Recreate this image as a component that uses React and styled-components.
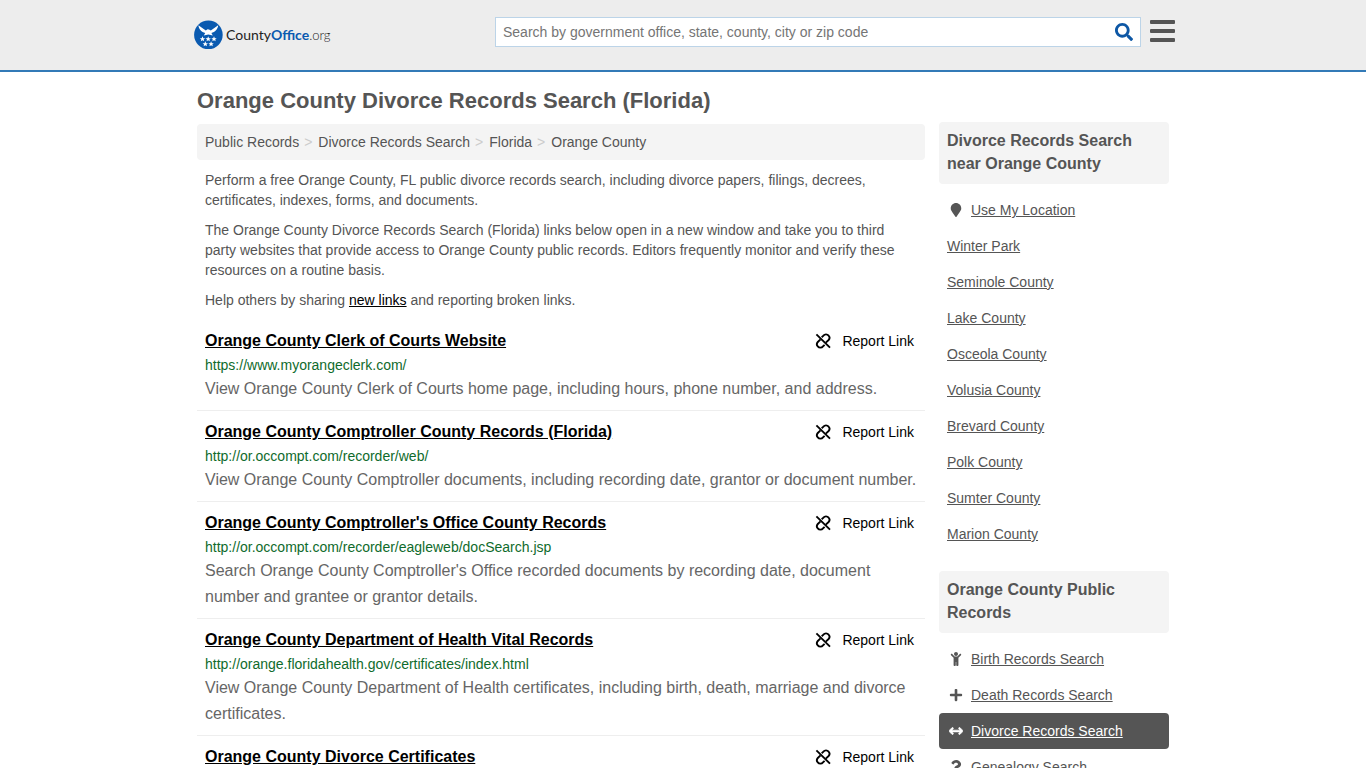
import React from "react";
import styled, { createGlobalStyle } from "styled-components";
import { FaSearch, FaMapMarker, FaChild, FaPlus, FaQuestion } from "react-icons/fa";
import { FaArrowsLeftRight } from "react-icons/fa6";

const GlobalStyle = createGlobalStyle`
  * {
    box-sizing: border-box;
  }

  body {
    margin: 0;
    background-color: #fff;
    color: #555;
    font-family: "Liberation Sans", Arial, sans-serif;
    font-size: 14px;
    line-height: 20px;
  }

  a {
    color: inherit;
  }
`;

const Header = styled.header`
  height: 72px;
  background-color: #ededed;
  border-bottom: 2px solid #337ab7;
`;

const HeaderInner = styled.div`
  display: flex;
  align-items: flex-start;
  justify-content: space-between;
  max-width: 984px;
  margin: 0 auto;
  padding: 16px 0 0 2px;
`;

const Logo = styled.a`
  display: block;
  margin-top: 4px;

  svg {
    display: block;
  }
`;

const HeaderTools = styled.div`
  display: flex;
  align-items: flex-start;
  gap: 9px;
`;

const SearchForm = styled.form`
  display: flex;
  align-items: center;
  width: 646px;
  height: 30px;
  margin-top: 1px;
  background-color: #fff;
  border: 1px solid #bcd4e8;
`;

const SearchInput = styled.input`
  flex: 1;
  min-width: 0;
  height: 28px;
  padding: 0 7px;
  border: 0;
  outline: 0;
  background: transparent;
  color: #555;
  font: inherit;

  &::placeholder {
    color: #757575;
    opacity: 1;
  }
`;

const SearchButton = styled.button`
  display: flex;
  padding: 0 7px;
  border: 0;
  background: transparent;
  color: #0d57a5;
  font-size: 18px;
  cursor: pointer;
`;

const MenuButton = styled.button`
  display: flex;
  flex-direction: column;
  gap: 5px;
  padding: 4px 0;
  border: 0;
  background: transparent;
  cursor: pointer;
`;

const MenuBar = styled.span`
  width: 25px;
  height: 4px;
  border-radius: 1px;
  background-color: #555;
`;

const Page = styled.div`
  display: flex;
  align-items: flex-start;
  gap: 14px;
  max-width: 972px;
  margin: 0 auto;
`;

const Main = styled.main`
  flex: 1;
  min-width: 0;
`;

const Title = styled.h1`
  margin: 16px 0 10px;
  font-size: 22px;
  line-height: 26px;
`;

const Breadcrumb = styled.nav`
  display: flex;
  padding: 8px;
  background-color: #f4f4f4;
  border-radius: 4px;

  a {
    text-decoration: none;
  }

  a + a::before {
    content: ">";
    padding: 0 6px 0 5px;
    color: #ccc;
  }
`;

const Intro = styled.div`
  padding: 0 8px;

  p {
    margin: 10px 0;
  }
`;

const InlineLink = styled.a`
  color: #000;
`;

const Results = styled.ul`
  margin: 0;
  padding: 0;
  list-style: none;
`;

const Result = styled.li`
  padding: 8px;
  border-bottom: 1px solid #eee;
`;

const ResultHead = styled.div`
  display: flex;
  justify-content: space-between;
  line-height: 26px;
`;

const ResultTitle = styled.a`
  color: #000;
  font-size: 16px;
  font-weight: bold;
`;

const ReportButton = styled.button`
  display: flex;
  align-items: center;
  gap: 11px;
  padding: 0 3px;
  border: 0;
  background: transparent;
  color: #000;
  font: inherit;
  cursor: pointer;
`;

const ResultUrl = styled.div`
  color: #0f6b2c;
  line-height: 22px;
`;

const ResultText = styled.div`
  margin-right: -8px;
  font-size: 16px;
  line-height: 26px;
  color: #666;
`;

const Sidebar = styled.aside`
  width: 230px;
  padding-top: 50px;
`;

const SideTitle = styled.h2`
  margin: 0 0 8px;
  padding: 7px 8px 9px;
  background-color: #f4f4f4;
  border-radius: 4px;
  font-size: 16px;
  line-height: 23px;
`;

const SideList = styled.ul`
  margin: 0 0 19px;
  padding: 0;
  list-style: none;
`;

const SideItem = styled.li`
  display: flex;
  align-items: center;
  gap: 6px;
  padding: 8px;
  border-radius: 4px;
  color: ${(props) => (props.$active ? "#fff" : "#555")};
  background-color: ${(props) => (props.$active ? "#555" : "transparent")};
`;

const SideIcon = styled.span`
  display: flex;
  justify-content: center;
  width: 18px;
  font-size: 14px;
`;

const results = [
  {
    title: "Orange County Clerk of Courts Website",
    url: "https://www.myorangeclerk.com/",
    text: "View Orange County Clerk of Courts home page, including hours, phone number, and address.",
  },
  {
    title: "Orange County Comptroller County Records (Florida)",
    url: "http://or.occompt.com/recorder/web/",
    text: "View Orange County Comptroller documents, including recording date, grantor or document number.",
  },
  {
    title: "Orange County Comptroller's Office County Records",
    url: "http://or.occompt.com/recorder/eagleweb/docSearch.jsp",
    text: "Search Orange County Comptroller's Office recorded documents by recording date, document number and grantee or grantor details.",
  },
  {
    title: "Orange County Department of Health Vital Records",
    url: "http://orange.floridahealth.gov/certificates/index.html",
    text: "View Orange County Department of Health certificates, including birth, death, marriage and divorce certificates.",
  },
  { title: "Orange County Divorce Certificates" },
];

const nearby = [
  { label: "Use My Location", icon: <FaMapMarker /> },
  { label: "Winter Park" },
  { label: "Seminole County" },
  { label: "Lake County" },
  { label: "Osceola County" },
  { label: "Volusia County" },
  { label: "Brevard County" },
  { label: "Polk County" },
  { label: "Sumter County" },
  { label: "Marion County" },
];

const records = [
  { label: "Birth Records Search", icon: <FaChild /> },
  { label: "Death Records Search", icon: <FaPlus /> },
  {
    label: "Divorce Records Search",
    icon: <FaArrowsLeftRight stroke="currentColor" strokeWidth="24" />,
    active: true,
  },
  { label: "Genealogy Search", icon: <FaQuestion /> },
];

const stars = [
  [9.5, 19],
  [15.2, 19],
  [21, 19],
  [12.3, 24],
  [18.1, 24],
];

const LogoMark = () => (
  <svg width="140" height="30" viewBox="0 0 140 30" role="img" aria-label="CountyOffice.org">
    <circle cx="15.4" cy="14.8" r="14.3" fill="#0a5ab0" />
    <path
      d="M5.400 5.200 12.800 10.600 14.600 9.200 16 9.400 17.800 10.600 25.200 5.200C24.800 9.200 22 12 18.400 12.900L19.800 15.600 15.300 14.400 10.800 15.600 12.200 12.900C8.600 12 5.800 9.200 5.400 5.200z"
      fill="#fff"
    />
    {stars.map(([x, y]) => (
      <path
        key={`${x}-${y}`}
        transform={`translate(${x} ${y})`}
        d="M0-2.700.8-.8 2.700-.7 1.200.5 1.700 2.300 0 1.300-1.700 2.300-1.200.5-2.700-.7-.8-.8z"
        fill="#fff"
      />
    ))}
    <text x="33" y="20" fontFamily="Lato, sans-serif" fontSize="14" fill="#222">
      County
      <tspan fill="#0a5ab0" fontWeight="bold">Office</tspan>
      <tspan fontSize="13" fontWeight="300">.org</tspan>
    </text>
  </svg>
);

const UnlinkIcon = () => (
  <svg width="16" height="16" viewBox="0 0 16 16" fill="none" stroke="currentColor" strokeWidth="1.9" aria-hidden="true">
    <path d="M1.400 1.400 15 14.600" />
    <path d="M6.700 4.200 8.400 2.600a3.300 3.300 0 0 1 5.200 0 3.300 3.300 0 0 1 0 4.400L10.800 9.600" />
    <path d="M5.500 6.400 2.800 9a3.300 3.300 0 0 0 0 4.400 3.300 3.300 0 0 0 5.200 0L9.600 11.800" />
  </svg>
);

const SideSection = ({ title, items }) => (
  <section>
    <SideTitle>{title}</SideTitle>
    <SideList>
      {items.map((item) => (
        <SideItem key={item.label} $active={item.active}>
          {item.icon && <SideIcon>{item.icon}</SideIcon>}
          <a href="#">{item.label}</a>
        </SideItem>
      ))}
    </SideList>
  </section>
);

const App = () => {
  return (
    <>
      <GlobalStyle />
      <Header>
        <HeaderInner>
          <Logo href="#">
            <LogoMark />
          </Logo>
          <HeaderTools>
            <SearchForm>
              <SearchInput
                type="text"
                aria-label="Search"
                placeholder="Search by government office, state, county, city or zip code"
              />
              <SearchButton type="button" aria-label="Submit search">
                <FaSearch />
              </SearchButton>
            </SearchForm>
            <MenuButton type="button" aria-label="Menu">
              <MenuBar />
              <MenuBar />
              <MenuBar />
            </MenuButton>
          </HeaderTools>
        </HeaderInner>
      </Header>
      <Page>
        <Main>
          <Title>Orange County Divorce Records Search (Florida)</Title>
          <Breadcrumb aria-label="Breadcrumb">
            <a href="#">Public Records</a>
            <a href="#">Divorce Records Search</a>
            <a href="#">Florida</a>
            <a href="#">Orange County</a>
          </Breadcrumb>
          <Intro>
            <p>
              Perform a free Orange County, FL public divorce records search, including divorce
              papers, filings, decrees, certificates, indexes, forms, and documents.
            </p>
            <p>
              The Orange County Divorce Records Search (Florida) links below open in a new window
              and take you to third party websites that provide access to Orange County public
              records. Editors frequently monitor and verify these resources on a routine basis.
            </p>
            <p>
              Help others by sharing <InlineLink href="#">new links</InlineLink> and reporting
              broken links.
            </p>
          </Intro>
          <Results>
            {results.map((result) => (
              <Result key={result.title}>
                <ResultHead>
                  <ResultTitle href="#">{result.title}</ResultTitle>
                  <ReportButton type="button">
                    <UnlinkIcon />
                    Report Link
                  </ReportButton>
                </ResultHead>
                {result.url && <ResultUrl>{result.url}</ResultUrl>}
                {result.text && <ResultText>{result.text}</ResultText>}
              </Result>
            ))}
          </Results>
        </Main>
        <Sidebar>
          <SideSection title="Divorce Records Search near Orange County" items={nearby} />
          <SideSection title="Orange County Public Records" items={records} />
        </Sidebar>
      </Page>
    </>
  );
};

export default App;
